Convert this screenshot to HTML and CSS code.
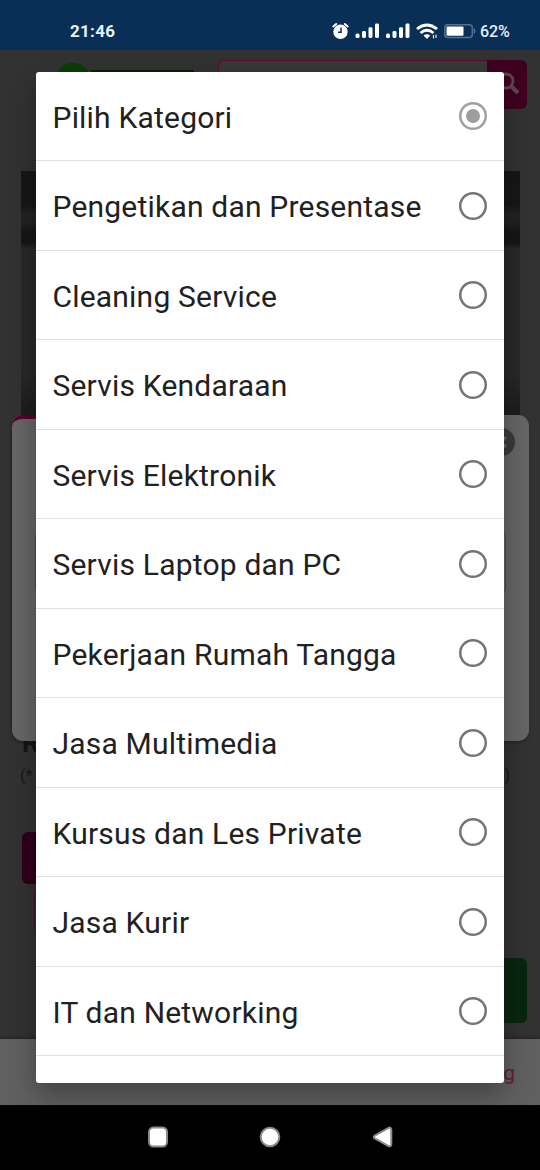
FILE: index.html
```html
<!DOCTYPE html>
<html lang="id">
<head>
<meta charset="utf-8">
<meta name="viewport" content="width=device-width">
<title>Pilih Kategori</title>
<link rel="stylesheet" href="styles.css">
</head>
<body>
<div class="phone">
  <header class="status">
    <span class="clock">21:46</span>
    <svg class="status-icons" width="156" height="22" viewBox="0 0 156 22" fill="#fff">
      <circle cx="9.5" cy="11.8" r="7.2"/>
      <path d="M2.3 6.4 5.2 4M16.700 6.400 13.800 4" stroke="#fff" stroke-width="2" stroke-linecap="round"/>
      <path d="M10 7.500v4.700H7" fill="none" stroke="#0a2f56" stroke-width="1.500"/>
      <g id="bars">
        <rect x="24.500" y="13.500" width="4" height="4.500" rx="1.500"/>
        <rect x="31" y="11" width="4" height="7" rx="1.400"/>
        <rect x="37.500" y="7.300" width="4" height="10.700" rx="1.400"/>
        <rect x="44" y="3.500" width="4" height="14.500" rx="1.400"/>
      </g>
      <use href="#bars" x="30.500"/>
      <g fill="none" stroke="#fff" stroke-width="2.900">
        <path d="M86 9Q96 .8 106 9"/>
        <path d="M89.500 13Q96 7.700 102.500 13"/>
      </g>
      <path d="M92.500 15.500Q96 12.900 99.200 15.500L96 19Z"/>
      <path d="M102.500 15v3.500M105 14.500v3.500" stroke="#dce8f2" stroke-width="1.200"/>
      <rect x="113.800" y="4.800" width="27.500" height="12.700" rx="3" fill="none" stroke="#54718e" stroke-width="1.500"/>
      <rect x="115.500" y="6.500" width="17" height="9.300" rx="1"/>
      <path d="M143 8.500q1.500 2.500 0 5" fill="none" stroke="#54718e" stroke-width="1.500"/>
    </svg>
    <span class="percent">62%</span>
  </header>

  <main class="page">
    <div class="topbar">
      <div class="logo"><i class="logo-dot"></i><i class="logo-line"></i></div>
      <div class="search">
        <div class="search-field"></div>
        <div class="search-button">
          <svg width="24" height="26" viewBox="0 0 24 26" fill="none" stroke="#5b4650" stroke-width="3"><circle cx="9" cy="9" r="7"/><path d="m14 14 7 7" stroke-width="4"/></svg>
        </div>
      </div>
    </div>
    <div class="hero"></div>
    <h2 class="title">R</h2>
    <div class="note"><span>(*</span><span>)</span></div>
    <div class="pink-button"></div>
    <div class="outline-button"></div>
    <div class="green-button"></div>
    <footer class="tabs"><span>g</span></footer>
    <section class="sheet">
      <div class="sheet-close"><svg width="28" height="28" viewBox="0 0 28 28" stroke="#666" stroke-width="3"><path d="m9 9 10 10M19 9 9 19"/></svg></div>
      <div class="sheet-field"></div>
    </section>
  </main>

  <nav class="system">
    <svg width="22" height="22" viewBox="0 0 22 22"><rect x="2" y="1.500" width="18" height="19" rx="4.500" fill="#fff" stroke="#8a8a8a" stroke-width="2"/></svg>
    <svg width="22" height="22" viewBox="0 0 22 22"><circle cx="11" cy="11" r="9.300" fill="#fff" stroke="#8a8a8a" stroke-width="2"/></svg>
    <svg width="22" height="22" viewBox="0 0 22 22"><path d="M3.800 9.600 17.500 1.900Q20 .9 20.300 3.500v15Q20 21 17.500 20L3.800 12.400Q1.800 11 3.800 9.600Z" fill="#fff" stroke="#8a8a8a" stroke-width="2"/></svg>
  </nav>

  <ul class="dialog" role="radiogroup">
    <li class="option selected"><span>Pilih Kategori</span><i class="radio"></i></li>
    <li class="option"><span>Pengetikan dan Presentase</span><i class="radio"></i></li>
    <li class="option"><span>Cleaning Service</span><i class="radio"></i></li>
    <li class="option"><span>Servis Kendaraan</span><i class="radio"></i></li>
    <li class="option"><span>Servis Elektronik</span><i class="radio"></i></li>
    <li class="option"><span>Servis Laptop dan PC</span><i class="radio"></i></li>
    <li class="option"><span>Pekerjaan Rumah Tangga</span><i class="radio"></i></li>
    <li class="option"><span>Jasa Multimedia</span><i class="radio"></i></li>
    <li class="option"><span>Kursus dan Les Private</span><i class="radio"></i></li>
    <li class="option"><span>Jasa Kurir</span><i class="radio"></i></li>
    <li class="option"><span>IT dan Networking</span><i class="radio"></i></li>
  </ul>
</div>
</body>
</html>
```
FILE: styles.css
```css
* { box-sizing: border-box; }
body { margin: 0; font-family: Roboto, sans-serif; }
.phone {
  position: relative;
  display: flex;
  flex-direction: column;
  width: 540px;
  height: 1170px;
  overflow: hidden;
  background: #323232;
}
.status {
  display: flex;
  align-items: center;
  height: 50px;
  padding: 12px 30px 0 70px;
  background: #0a2f56;
  color: #e6f1fa;
}
.clock { flex: 1; font-size: 17px; font-weight: 700; letter-spacing: .3px; }
.status-icons { flex: none; margin-right: -7px; }
.percent { width: 30px; font-size: 16px; font-weight: 500; letter-spacing: -.1px; white-space: nowrap; }

.page {
  position: relative;
  display: flex;
  flex-direction: column;
  height: 1055px;
}
.topbar {
  display: flex;
  justify-content: space-between;
  height: 121px;
  padding: 10px 13px 0 55px;
}
.logo { display: flex; width: 150px; padding-top: 3px; }
.logo-dot { width: 36px; height: 36px; border-radius: 50%; background: #083e06; }
.logo-line { width: 103px; height: 5px; margin-top: 7px; background: #0b1d08; }
.search { display: flex; width: 309px; height: 49px; }
.search-field { flex: 1; border: 1px solid #5c0d2c; border-right: 0; border-radius: 6px 0 0 6px; background: #383838; }
.search-button {
  width: 40px;
  padding: 12px 0 0 10px;
  border-radius: 0 6px 6px 0;
  background: #3f001f;
}
.hero {
  width: 499px;
  height: 246px;
  margin-left: 21px;
  background: linear-gradient(#151616 0, #161818 34px, #222 42px, #222 50px, #151717 62px, #151717 72px, #292929 78px, #292929 200px, #1d1d1d 240px);
}
.title { margin: 311px 0 0 22px; font-size: 27px; line-height: 30px; color: #151515; }
.note { display: flex; justify-content: space-between; padding: 8px 30px 0 20px; font-size: 16px; line-height: 20px; color: #171717; }
.pink-button { width: 200px; height: 52px; margin: 46px 0 0 22px; border-radius: 6px; background: #2f001a; }
.outline-button { width: 200px; height: 52px; margin-left: 34px; border: 1px solid #43172c; border-radius: 6px; }
.green-button { width: 300px; height: 65px; margin: 22px 13px 0 auto; border-radius: 6px; background: #08260e; }
.tabs {
  display: flex;
  justify-content: flex-end;
  height: 66px;
  margin-top: 16px;
  padding: 22px 25px 0;
  background: #606060;
  color: #651b40;
  font-size: 21px;
  box-shadow: 0 -1px 3px #222;
}
.sheet {
  position: absolute;
  left: 12px;
  top: 365px;
  width: 516.500px;
  height: 326px;
  border-radius: 11px;
  background: #666;
  box-shadow: -1px 2px 3px rgba(0, 0, 0, .25);
}
.sheet::before {
  content: "";
  position: absolute;
  left: 0;
  top: 0;
  width: 70px;
  height: 11px;
  border-top: 4px solid #5a0030;
  border-radius: 11px 0 0;
}
.sheet-close { width: 28px; height: 28px; margin: 13px 14px 0 auto; border-radius: 50%; background: #3a3a3a; }
.sheet-field { width: 471px; height: 61px; margin: 76px 0 0 23px; border: 1px solid #4b4b4b; border-radius: 4px; }

.system {
  display: flex;
  justify-content: center;
  gap: 90px;
  height: 65px;
  padding-top: 21px;
  background: #000;
}

.dialog {
  position: absolute;
  left: 36px;
  top: 72px;
  width: 468px;
  height: 1010.500px;
  margin: 0;
  padding: 0;
  overflow: hidden;
  list-style: none;
  border-radius: 3px;
  background: #fff;
  box-shadow: 0 12px 28px rgba(0, 0, 0, .32);
}
.option {
  display: flex;
  align-items: center;
  justify-content: space-between;
  height: 89.500px;
  padding: 0 17.500px 0 16.500px;
  background: linear-gradient(#dfdfdf, #dfdfdf) 0 88px / 100% 1px no-repeat;
  color: #212121;
  font-size: 30px;
  letter-spacing: .2px;
  line-height: 36px;
  white-space: nowrap;
}
.option span { padding-top: 2px; }
.radio {
  display: flex;
  align-items: center;
  justify-content: center;
  flex: none;
  width: 28px;
  height: 28px;
  margin-bottom: 1px;
  box-shadow: inset 0 0 0 2.500px #757575;
  border-radius: 50%;
}
.selected .radio { box-shadow: inset 0 0 0 2.500px #a0a0a0; }
.selected .radio::after { content: ""; width: 14px; height: 14px; border-radius: 50%; background: #9e9e9e; }
```
